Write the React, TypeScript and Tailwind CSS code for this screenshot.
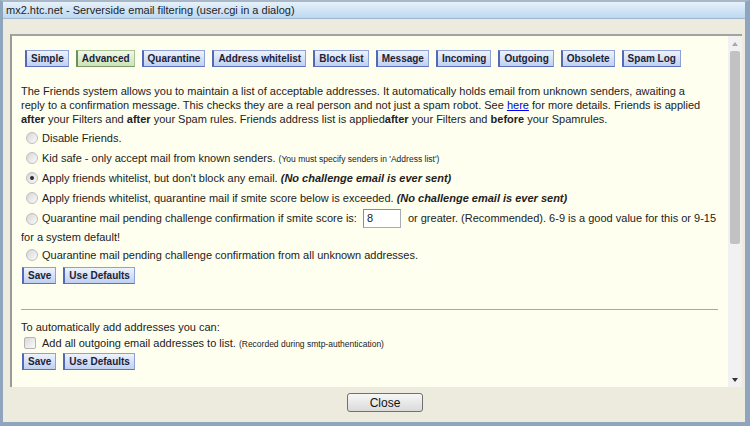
import React from "react";

const tabs = [
  "Simple",
  "Advanced",
  "Quarantine",
  "Address whitelist",
  "Block list",
  "Message",
  "Incoming",
  "Outgoing",
  "Obsolete",
  "Spam Log",
];

function Button({ label, active = false }: { label: string; active?: boolean }) {
  const tone = active
    ? "bg-gradient-to-b from-[#f0f8e8] to-[#cbe3b8] border-[#a9c494] border-l-[#6f8f59] border-b-[#7d9a66]"
    : "bg-gradient-to-b from-[#eef3fc] to-[#c0d0f0] border-[#8ea0d8] border-l-[#5468b8] border-b-[#5e72bd]";
  return (
    <button
      className={`h-[17px] border border-l-2 px-[4px] text-[10px] font-bold leading-none text-[#1c2236] ${tone}`}
    >
      {label}
    </button>
  );
}

function Radio({ checked = false }: { checked?: boolean }) {
  return (
    <span className="ml-[5px] inline-flex h-[12px] w-[12px] shrink-0 items-center justify-center rounded-full border border-[#bdbdbd] bg-gradient-to-br from-[#d6d6d6] to-[#fbfbfb]">
      {checked && <span className="h-[4px] w-[4px] rounded-full bg-[#2c2c2c]" />}
    </span>
  );
}

function RadioRow({ checked, children }: { checked?: boolean; children: React.ReactNode }) {
  return (
    <div className="flex h-[20px] items-center whitespace-nowrap">
      <Radio checked={checked} />
      <span className="ml-[4px]">{children}</span>
    </div>
  );
}

function SaveRow() {
  return (
    <div className="flex gap-[7px] pl-[1px]">
      <Button label="Save" />
      <Button label="Use Defaults" />
    </div>
  );
}

export default function App() {
  return (
    <div className="flex h-[426px] w-[750px] flex-col border-b-[4px] border-l-[3px] border-r-[5px] border-t-[2px] border-[#8fa4bd] border-t-[#a9b7c6] bg-[#ecebdd] font-['Liberation_Sans',Arial,sans-serif] text-[11px] text-[#222]">
      {/* Title bar */}
      <div className="flex h-[17px] items-center border-b border-[#9fb6cc] bg-gradient-to-b from-[#e6f1fb] to-[#bcd8f0] pl-[3px] text-[11px] text-[#1e1e1e]">
        mx2.htc.net - Serverside email filtering (user.cgi in a dialog)
      </div>

      {/* Frame */}
      <div className="ml-[7px] mr-[3px] mt-[15px] flex h-[353px] border-l-2 border-t-2 border-[#a3a3a3] border-l-[#9a9a9a] bg-[#fffff0]">
        <div className="min-w-0 flex-1 overflow-hidden pl-[9px] pr-[10px] pt-[14px]">
          <div className="ml-[4px] flex gap-[7px]">
            {tabs.map((t) => (
              <Button key={t} label={t} active={t === "Advanced"} />
            ))}
          </div>

          <p className="mt-[17px] whitespace-nowrap leading-[14px]">
            The Friends system allows you to maintain a list of acceptable addresses. It automatically holds email from unknown senders, awaiting a
            <br />
            reply to a confirmation message. This checks they are a real person and not just a spam robot. See{" "}
            <span className="text-[#0000ee] underline">here</span> for more details. Friends is applied
            <br />
            <b>after</b> your Filters and <b>after</b> your Spam rules. Friends address list is applied<b>after</b> your Filters and{" "}
            <b>before</b> your Spamrules.
          </p>

          <div className="mt-[2px]">
            <RadioRow>Disable Friends.</RadioRow>
            <RadioRow>
              Kid safe - only accept mail from known senders.{" "}
              <span className="text-[8.5px]">(You must specify senders in 'Address list')</span>
            </RadioRow>
            <RadioRow checked>
              Apply friends whitelist, but don't block any email. <b className="italic">(No challenge email is ever sent)</b>
            </RadioRow>
            <RadioRow>
              Apply friends whitelist, quarantine mail if smite score below is exceeded.{" "}
              <b className="italic">(No challenge email is ever sent)</b>
            </RadioRow>
            <div className="flex h-[21px] items-center whitespace-nowrap">
              <Radio />
              <span className="ml-[4px]">Quarantine mail pending challenge confirmation if smite score is:</span>
              <span className="ml-[6px] flex h-[19px] w-[38px] shrink-0 items-center border border-[#a9abb3] border-l-[#8b8d94] border-t-[#8b8d94] bg-white pl-[3px]">
                8
              </span>
              <span className="ml-[7px]">or greater. (Recommended). 6-9 is a good value for this or 9-15</span>
            </div>
            <div className="flex h-[16px] items-center">for a system default!</div>
            <RadioRow>Quarantine mail pending challenge confirmation from all unknown addresses.</RadioRow>
          </div>

          <div className="mt-[2px]">
            <SaveRow />
          </div>

          <hr className="mt-[25px] border-t border-[#a8a8a8]" />

          <div className="mt-[10px] leading-[14px]">To automatically add addresses you can:</div>
          <div className="flex h-[18px] items-center whitespace-nowrap">
            <span className="ml-[3px] h-[12px] w-[12px] shrink-0 rounded-[2px] border border-[#b4b4b4] bg-gradient-to-br from-[#d9d9d9] to-[#fbfbfb]" />
            <span className="ml-[6px]">
              Add all outgoing email addresses to list.{" "}
              <span className="text-[8.5px]">(Recorded during smtp-authentication)</span>
            </span>
          </div>
          <div className="mt-[1px]">
            <SaveRow />
          </div>
        </div>

        {/* Scrollbar */}
        <div className="flex w-[14px] shrink-0 flex-col items-center bg-[#f1f1f1] pb-[5px] pt-[6px]">
          <span className="h-0 w-0 border-x-[3px] border-b-[4px] border-x-transparent border-b-[#a8a8a8]" />
          <div className="mt-[5px] h-[193px] w-[10px] rounded-[2px] bg-[#c2c2c2]" />
          <div className="flex-1" />
          <span className="h-0 w-0 border-x-[3px] border-t-[4px] border-x-transparent border-t-[#333]" />
        </div>
      </div>

      {/* Footer */}
      <div className="flex-1 pl-[344px] pt-[6px]">
        <button className="h-[19px] w-[76px] rounded-[3px] border border-[#707070] bg-gradient-to-b from-[#f7f7f7] to-[#dadada] text-[12px] text-[#111]">
          Close
        </button>
      </div>
    </div>
  );
}
